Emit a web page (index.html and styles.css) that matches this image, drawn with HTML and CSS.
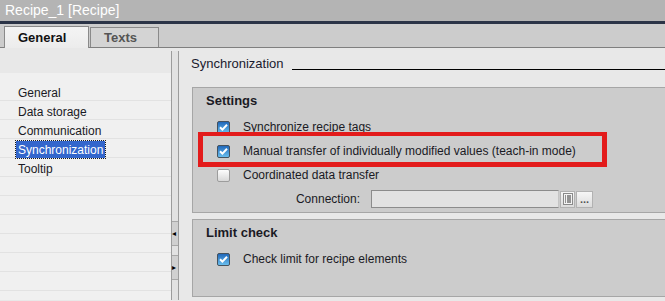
FILE: index.html
```html
<!DOCTYPE html>
<html lang="en">
<head>
  <meta charset="UTF-8" />
  <title>Recipe_1 [Recipe]</title>
  <link rel="stylesheet" href="styles.css">
</head>
<body>

  <div class="titlebar">Recipe_1 [Recipe]</div>
  <div class="accent"></div>

  <div class="tabstrip">
    <div class="tab active">General</div>
    <div class="tab">Texts</div>
  </div>

  <div class="main">
    <div class="nav">
      <div class="nav-head"></div>
      <div class="nav-list">
        <div class="nav-item"><span>General</span></div>
        <div class="nav-item"><span>Data storage</span></div>
        <div class="nav-item"><span>Communication</span></div>
        <div class="nav-item selected"><span>Synchronization</span></div>
        <div class="nav-item"><span>Tooltip</span></div>
        <div class="nav-item"></div>
        <div class="nav-item"></div>
        <div class="nav-item"></div>
        <div class="nav-item"></div>
        <div class="nav-item"></div>
        <div class="nav-item"></div>
      </div>
    </div>

    <div class="splitter">
      <div class="split-btn left">&#9666;</div>
      <div class="split-btn right">&#9656;</div>
    </div>

    <div class="content">
      <div class="section-title">
        <span>Synchronization</span>
        <div class="rule"></div>
      </div>

      <div class="group settings">
        <div class="group-title">Settings</div>

        <div class="check-row">
          <svg class="cb" width="13" height="13" viewBox="0 0 13 13"><use href="#cb-on"/></svg>
          <span>Synchronize recipe tags</span>
        </div>
        <div class="check-row">
          <svg class="cb" width="13" height="13" viewBox="0 0 13 13"><use href="#cb-on"/></svg>
          <span>Manual transfer of individually modified values (teach-in mode)</span>
        </div>
        <div class="check-row">
          <svg class="cb" width="13" height="13" viewBox="0 0 13 13"><use href="#cb-off"/></svg>
          <span>Coordinated data transfer</span>
        </div>
        <div class="field-row">
          <label>Connection:</label>
          <div class="field"></div>
          <div class="mini-btn list">
            <svg width="12" height="14" viewBox="0 0 12 14">
              <rect x="1.5" y="1.5" width="9" height="11" fill="#f4f4f4" stroke="#8a8a8a"/>
              <path d="M3 4h1M5 4h4M3 6h1M5 6h4M3 8h1M5 8h4M3 10h1M5 10h4" stroke="#333" stroke-width="1"/>
            </svg>
          </div>
          <div class="mini-btn dots">...</div>
        </div>

        <div class="highlight"></div>
      </div>

      <div class="group limits">
        <div class="group-title">Limit check</div>
        <div class="check-row">
          <svg class="cb" width="13" height="13" viewBox="0 0 13 13"><use href="#cb-on"/></svg>
          <span>Check limit for recipe elements</span>
        </div>
      </div>
    </div>
  </div>

  <svg width="0" height="0" class="defs">
    <defs>
      <linearGradient id="g-on" x1="0" y1="0" x2="0" y2="1">
        <stop offset="0" stop-color="#1d64b8"/>
        <stop offset="1" stop-color="#6cc2f0"/>
      </linearGradient>
      <linearGradient id="g-off" x1="0" y1="0" x2="0" y2="1">
        <stop offset="0" stop-color="#ffffff"/>
        <stop offset="1" stop-color="#d6d6d6"/>
      </linearGradient>
      <g id="cb-on">
        <rect x="0.5" y="0.5" width="12" height="12" rx="1.5" fill="url(#g-on)" stroke="#45525e"/>
        <path d="M3 6.2 L5.4 8.6 L10 3.8" fill="none" stroke="#fff" stroke-width="2"/>
      </g>
      <g id="cb-off">
        <rect x="0.5" y="0.5" width="12" height="12" rx="1.5" fill="url(#g-off)" stroke="#9c9c9c"/>
      </g>
    </defs>
  </svg>

</body>
</html>
```

FILE: styles.css
```css
html, body {
  margin: 0;
  padding: 0;
}

body {
  width: 665px;
  height: 301px;
  overflow: hidden;
  font-family: "Liberation Sans", Arial, sans-serif;
  font-size: 12px;
  color: #1a1a24;
  background: #e8e8e8;
}

.defs {
  position: absolute;
}

.titlebar {
  height: 21px;
  line-height: 20px;
  padding-left: 5px;
  background: #b4b4b4;
  color: #ffffff;
  font-size: 14px;
}

.accent {
  height: 3px;
  background: #2b3447;
}

.tabstrip {
  height: 23px;
  background: #cccccc;
  border-bottom: 1px solid #7f7f7f;
  display: flex;
  align-items: flex-end;
  padding-left: 4px;
}

.tab {
  box-sizing: border-box;
  width: 69px;
  height: 20px;
  margin-left: 1px;
  background: #d4d4d4;
  border: 1px solid #8a8a8a;
  border-bottom: none;
  font-size: 13px;
  font-weight: bold;
  color: #555555;
  line-height: 19px;
  padding-left: 13px;
}

.tab.active {
  width: 85px;
  height: 22px;
  margin-left: 0;
  margin-bottom: -1px;
  background: linear-gradient(#f4f4f4, #ececec);
  color: #111111;
  line-height: 21px;
}

.main {
  display: flex;
  height: 252px;
}

.nav {
  flex: none;
  width: 171px;
  background: #f0f0f0;
}

.nav-head {
  height: 25px;
  background: #e8e8e8;
}

.nav-list {
  padding-top: 9px;
}

.nav-item {
  box-sizing: border-box;
  height: 19px;
  border-bottom: 1px solid #e2e2e2;
  padding-left: 16px;
  line-height: 22px;
}

.nav-item span {
  padding: 2px 2px 1px;
}

.nav-item.selected span {
  background: #3366cc;
  color: #ffffff;
  outline: 1px dotted #1a1a1a;
}

.splitter {
  flex: none;
  box-sizing: border-box;
  width: 8px;
  margin-top: 3px;
  background: #e2e2e2;
  border-left: 1px solid #9c9c9c;
  border-right: 1px solid #9c9c9c;
  display: flex;
  flex-direction: column;
  padding-top: 170px;
}

.split-btn {
  height: 23px;
  border-top: 1px solid #a8a8a8;
  border-bottom: 1px solid #a8a8a8;
  background: #d0d0d0;
  font-size: 8px;
  line-height: 23px;
  color: #000000;
  margin-bottom: 9px;
}

.content {
  flex: 1;
  min-width: 0;
  overflow: hidden;
  padding: 8px 0 0 12px;
}

.section-title {
  display: flex;
  align-items: flex-end;
  font-size: 13px;
  line-height: 16px;
  color: #1a1a2e;
}

.section-title .rule {
  flex: 1;
  margin-left: 8px;
  margin-bottom: 2px;
  border-bottom: 1px solid #000000;
}

.group {
  position: relative;
  box-sizing: border-box;
  width: 500px;
  margin-left: 1px;
  background: #cccccc;
  border: 1px solid #a6a6a6;
  padding: 4px 0 0 13px;
}

.settings {
  margin-top: 15px;
  height: 126px;
}

.limits {
  margin-top: 6px;
  height: 78px;
}

.group-title {
  font-size: 13px;
  font-weight: bold;
  line-height: 18px;
  margin-bottom: 5px;
}

.check-row {
  display: flex;
  align-items: center;
  height: 24px;
  padding-left: 11px;
}

.check-row .cb {
  margin-right: 13px;
  flex: none;
}

.field-row {
  display: flex;
  align-items: center;
  height: 24px;
}

.field-row label {
  flex: none;
  width: 154px;
  text-align: right;
}

.field {
  flex: none;
  box-sizing: border-box;
  width: 188px;
  height: 18px;
  margin-left: 11px;
  background: #e2e2e2;
  border: 1px solid #8c8c8c;
  border-right-color: #c4c4c4;
}

.mini-btn {
  flex: none;
  box-sizing: border-box;
  height: 17px;
  margin-left: 1px;
  border: 1px solid #b2b2b2;
  background: linear-gradient(#f6f6f6, #dcdcdc);
  display: flex;
  justify-content: center;
}

.mini-btn.list {
  width: 15px;
  align-items: center;
}

.mini-btn.dots {
  width: 17px;
  font-size: 11px;
  font-weight: bold;
  line-height: 14px;
  color: #555555;
}

.highlight {
  position: absolute;
  left: 5px;
  top: 44px;
  width: 399px;
  height: 26px;
  border: 4px solid #e31b1b;
  border-width: 4px 5px 5px 5px;
}
```
